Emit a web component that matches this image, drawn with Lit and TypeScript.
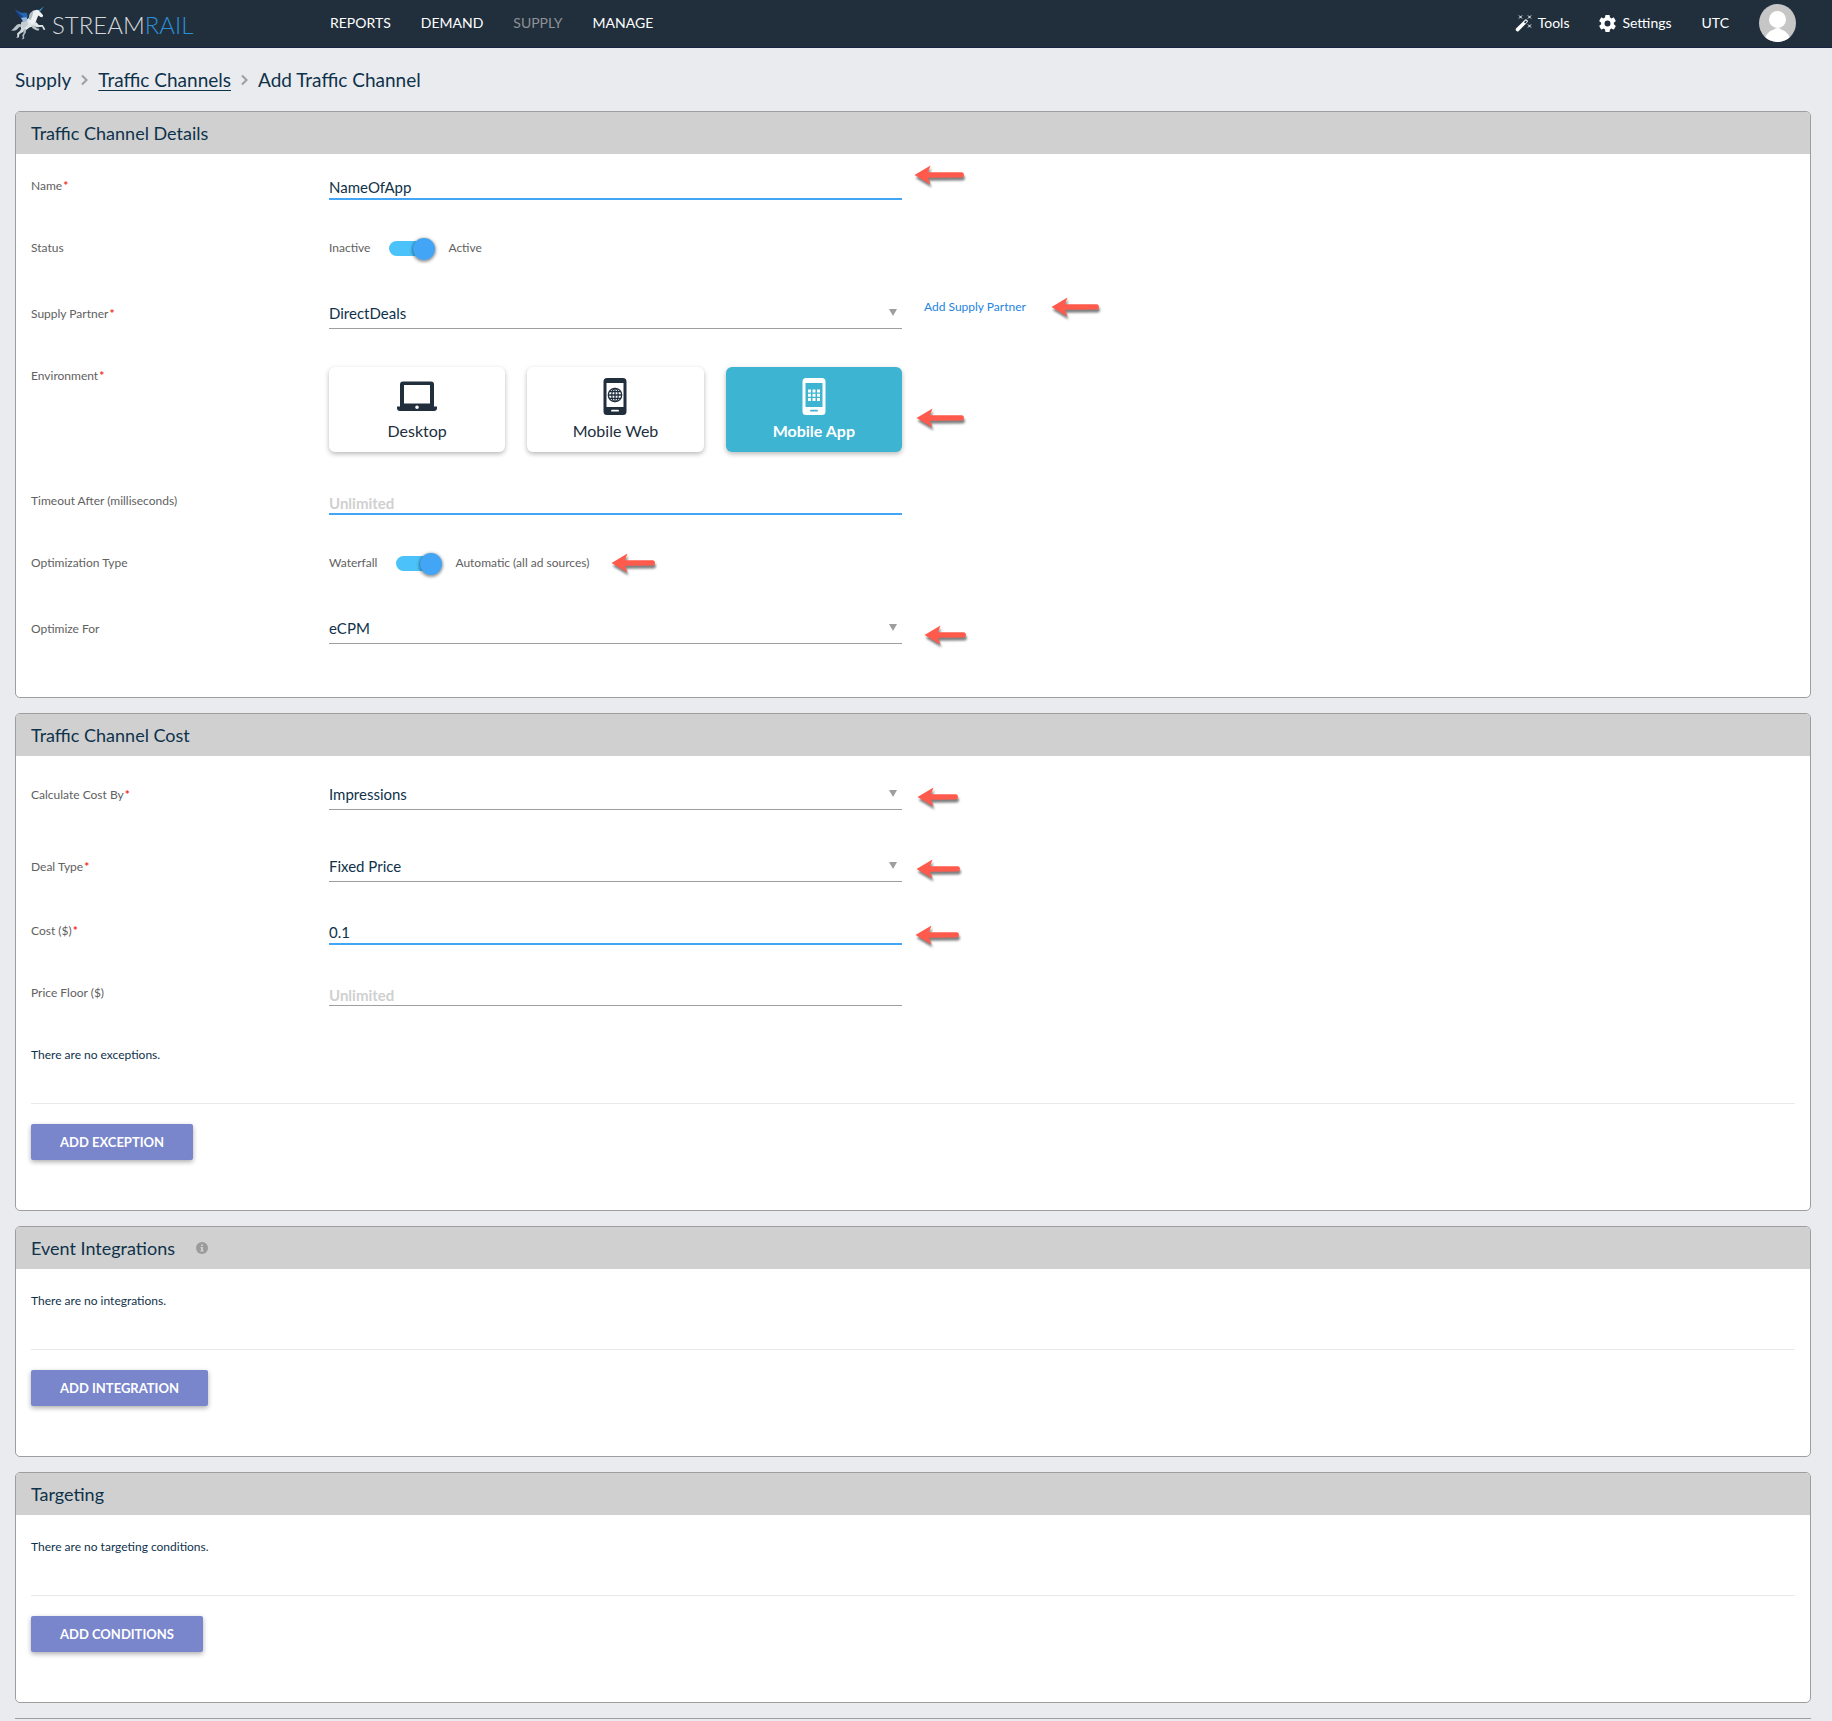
import { LitElement, html, css, svg, nothing, type TemplateResult } from "lit";
import { customElement, state } from "lit/decorators.js";
import { classMap } from "lit/directives/class-map.js";
import { styleMap } from "lit/directives/style-map.js";

type Environment = "desktop" | "web" | "app";

const unicorn = html`
  <svg class="unicorn" viewBox="28 12 112 108" aria-hidden="true">
    <path d="M60 70 C50 66 45 78 38 84 C36 87 33 88 30 88 C38 92 48 90 52 84 C56 80 58 78 62 78z" fill="#b9c3c8" />
    <path d="M64 64 L80 54 L94 48 L108 62 L104 76 L88 80 L76 90 L64 86 L60 74z" fill="#dfe6e8" />
    <path d="M64 64 L80 54 L84 72 L70 84 L60 74z" fill="#c3cdd2" />
    <path d="M86 52 L90 38 L100 28 L112 25 L118 26 L122 32 L131 42 L129 48 L123 47 L116 43 L112 52 L108 64 L98 70 L88 64z" fill="#eef2f3" />
    <path d="M86 52 L90 36 L102 26 L98 42 L92 58z" fill="#aebbc2" />
    <path d="M64 82 L58 92 L50 99 L51 108 L47 113 L56 110 L57 101 L68 94 L76 86z" fill="#d3dbde" />
    <path d="M70 86 L70 98 L66 104 L68 112 L64 117 L72 115 L72 104 L77 96 L78 84z" fill="#aebbc2" />
    <path d="M98 68 L110 64 L118 72 L130 72 L136 82 L138 87 L132 87 L128 78 L114 79 L102 76z" fill="#dfe6e8" />
    <path d="M94 74 L104 74 L112 82 L120 84 L116 90 L108 88 L98 82z" fill="#b9c3c8" />
    <path d="M44 24 L62 34 L80 34 L83 44 L80 56 L72 60 L58 46z" fill="#2468b4" />
    <path d="M44 24 L66 44 L76 58 L68 54 L52 40z" fill="#173f86" />
    <path d="M62 50 L80 48 L82 58 L70 64z" fill="#8fb7dd" />
    <path d="M117 27 L134 14 L121 31z" fill="#3b9de0" />
  </svg>
`;

const wand = html`
  <svg class="glyph" viewBox="0 0 17 17" aria-hidden="true">
    <path d="M1 13.6 L10.2 4.6 Q11 4 11.8 4.7 L12.6 5.5 Q13.3 6.3 12.6 7 L3.5 16.2 Q2.6 16.9 1.8 16.2 L1 15.4 Q0.3 14.5 1 13.6z M9 7.3 L10.2 8.5 L12 6.6 L10.9 5.5z" fill="#fff" fill-rule="evenodd" />
    <path d="M4 0.5l3 3m0-3l-3 3M13 0.5l3 3m0-3l-3 3M13 9.5l3 3m0-3l-3 3" stroke="#fff" stroke-width="1" />
  </svg>
`;

const cog = html`
  <svg class="glyph" viewBox="2 2 20 20" aria-hidden="true">
    <path fill="#fff" d="M12,15.5A3.5,3.5 0 0,1 8.5,12A3.5,3.5 0 0,1 12,8.5A3.5,3.5 0 0,1 15.5,12A3.5,3.5 0 0,1 12,15.5M19.43,12.97C19.47,12.65 19.5,12.33 19.5,12C19.5,11.67 19.47,11.34 19.43,11L21.54,9.37C21.73,9.22 21.78,8.95 21.66,8.73L19.66,5.27C19.54,5.05 19.27,4.96 19.05,5.05L16.56,6.05C16.04,5.66 15.5,5.32 14.87,5.07L14.5,2.42C14.46,2.18 14.25,2 14,2H10C9.75,2 9.54,2.18 9.5,2.42L9.13,5.07C8.5,5.32 7.96,5.66 7.44,6.05L4.95,5.05C4.73,4.96 4.46,5.05 4.34,5.27L2.34,8.73C2.21,8.95 2.27,9.22 2.46,9.37L4.57,11C4.53,11.34 4.5,11.67 4.5,12C4.5,12.33 4.53,12.65 4.57,12.97L2.46,14.63C2.27,14.78 2.21,15.05 2.34,15.27L4.34,18.73C4.46,18.95 4.73,19.03 4.95,18.95L7.44,17.94C7.96,18.34 8.5,18.68 9.13,18.93L9.5,21.58C9.54,21.82 9.75,22 10,22H14C14.25,22 14.46,21.82 14.5,21.58L14.87,18.93C15.5,18.67 16.04,18.34 16.56,17.94L19.05,18.95C19.27,19.03 19.54,18.95 19.66,18.73L21.66,15.27C21.78,15.05 21.73,14.78 21.54,14.63L19.43,12.97Z" />
  </svg>
`;

const chevron = html`
  <svg class="chevron" viewBox="0 0 7 12" aria-hidden="true">
    <path d="M1 1.5 L5.5 6 L1 10.5" fill="none" stroke="#9e9e9e" stroke-width="2" />
  </svg>
`;

const laptop = html`
  <svg class="env-icon" viewBox="0 0 40 38" aria-hidden="true">
    <path fill="currentColor" fill-rule="evenodd" d="M6 4.500h28a3 3 0 0 1 3 3V29.500h3v1.500a3 3 0 0 1-3 3H3a3 3 0 0 1-3-3v-1.500h3V7.500a3 3 0 0 1 3-3zM7 8v18.500h26V8zM20 28.400a1.800 1.800 0 1 0 .01 3.600 1.800 1.800 0 0 0 0-3.600z" />
  </svg>
`;

const phone = (screen: TemplateResult) => html`
  <svg class="env-icon" viewBox="0 0 40 38" aria-hidden="true">
    <path fill="currentColor" fill-rule="evenodd" d="M12 1h16a3.500 3.500 0 0 1 3.500 3.500v30a3.500 3.500 0 0 1-3.500 3.500H12A3.500 3.500 0 0 1 8.500 34.500V4.500A3.500 3.500 0 0 1 12 1zM11.500 6v24h17v-24zM17 32.700a.9.9 0 0 0 0 1.900h6a.9.9 0 0 0 0-1.900z" />
    ${screen}
  </svg>
`;

const globe = svg`
  <g fill="none" stroke="currentColor" stroke-width="1.3">
    <circle cx="20" cy="18" r="6.7" />
    <ellipse cx="20" cy="18" rx="3.2" ry="6.7" />
    <path d="M20 11.300v13.400M13.300 18h13.400M14.300 14.700h11.400M14.300 21.300h11.400" />
  </g>
`;

const appGrid = svg`
  <path fill="currentColor" d="M14 12.500h3v3h-3zM18.500 12.500h3v3h-3zM23 12.500h3v3h-3zM14 16.800h3v3h-3zM18.500 16.800h3v3h-3zM23 16.800h3v3h-3zM14 21.100h3v3h-3zM18.500 21.100h3v3h-3zM23 21.100h3v3h-3z" />
`;

/** Red callout arrow laid over a row: tip position relative to the row, and its length. */
const arrow = (x: number, y: number, length: number) => html`
  <svg
    class="arrow"
    viewBox="0 0 ${length + 4} 26"
    style=${styleMap({ left: `${x}px`, top: `${y - 11}px`, width: `${length + 4}px` })}
    aria-hidden="true"
  >
    <path
      d="M0.5 11 L16.5 1.5 L14 8.3 L${length - 2} 8.3 Q${length} 8.5 ${length} 11 Q${length} 13.4 ${length - 2} 13.4 L14 13.7 L16.5 20.5z"
      fill="#ff5a4b"
    />
  </svg>
`;

@customElement("app-root")
export class AppRoot extends LitElement {
  @state() private environment: Environment = "app";

  static styles = css`
    :host {
      display: block;
      min-height: 100vh;
      background: #eaebef;
      color: #0f324b;
      font: 12px/16px Lato, "Liberation Sans", sans-serif;
    }
    *, *::before { box-sizing: border-box; }
    a { color: inherit; text-decoration: none; }
    .topbar {
      display: flex;
      align-items: center;
      height: 48px;
      padding: 0 36px 1px 10px;
      background: #212f3d;
      border-bottom: 1px solid #1a2440;
      color: #fff;
      font-size: 14px;
      line-height: 20px;
    }
    .brand { display: flex; align-items: center; gap: 6px; width: 320px; }
    .unicorn { width: 36px; height: 36px; }
    .wordmark { font-size: 24px; line-height: 32px; font-weight: 300; padding-top: 4px; color: #d5d9dc; }
    .wordmark-accent { color: #2b8fd8; }
    .nav { display: flex; gap: 30px; flex: 1; }
    .current { color: #8f9296; }
    .account { display: flex; align-items: center; gap: 30px; }
    .tool { display: flex; align-items: center; gap: 6px; }
    .glyph { width: 17px; height: 17px; }
    .avatar { width: 37px; height: 38px; border-radius: 50%; display: block; }
    .page { display: flex; flex-direction: column; gap: 15px; padding: 0 21px 0 15px; }
    .crumbs {
      display: flex;
      align-items: center;
      gap: 10px;
      height: 48px;
      padding-top: 15px;
      font-size: 19px;
      line-height: 24px;
    }
    .crumb-link { text-decoration: underline; text-decoration-thickness: 1px; text-underline-offset: 3px; }
    .chevron { width: 7px; height: 12px; }
    .card { border: 1px solid #9e9e9e; border-radius: 5px; background: #fff; overflow: hidden; }
    .card-head {
      display: flex;
      align-items: center;
      gap: 21px;
      height: 42px;
      padding: 0 15px;
      background: #d0d0d0;
    }
    .card-title { margin: 0; font-size: 18px; line-height: 24px; font-weight: 400; }
    .info { width: 12px; height: 12px; }
    .card-body { padding: 15px 15px 50px; }
    .card-body.form { padding-bottom: 23px; }
    .card-body.cost { padding-top: 18px; }
    .row {
      position: relative;
      display: grid;
      grid-template-columns: 298px minmax(0, 573px) 1fr;
      min-height: 62px;
      align-items: start;
    }
    .row.pick { min-height: 66px; }
    .cost .row.pick { min-height: 72px; }
    .cost .row.pick + .row.pick { min-height: 68px; }
    .row.environment { min-height: 125px; }
    .label { color: #616161; line-height: 34px; }
    .pick .label { line-height: 42px; }
    .required { margin-left: 1px; color: #f62d20; font-weight: 700; }
    .text-input, .select {
      width: 100%;
      margin: 0;
      border: 0;
      border-bottom: 1px solid #9e9e9e;
      border-radius: 0;
      outline: none;
      background: transparent;
      color: inherit;
      font: 15px/20px Lato, "Liberation Sans", sans-serif;
    }
    .text-input { height: 30px; padding: 7px 0 0; }
    .text-input.filled { height: 31px; border-bottom: 2px solid #42a5f5; }
    .text-input:placeholder-shown { padding-top: 9px; }
    .text-input::placeholder { color: #d0d0d0; font-weight: 700; opacity: 1; }
    .select-wrap { display: grid; }
    .select { grid-area: 1 / 1; height: 36px; padding: 4px 0 0; appearance: none; }
    .caret {
      grid-area: 1 / 1;
      justify-self: end;
      width: 8px;
      height: 7px;
      margin: 16px 5px 0 0;
      pointer-events: none;
    }
    .switch { display: flex; align-items: center; gap: 19px; height: 34px; color: #616161; }
    .toggle {
      position: relative;
      appearance: none;
      width: 40px;
      height: 15px;
      margin: 0;
      border-radius: 15px;
      background: #4bc3fa;
    }
    .toggle::before {
      content: "";
      position: absolute;
      left: 0;
      top: -3px;
      width: 22px;
      height: 22px;
      border-radius: 50%;
      background: #42a5f5;
      box-shadow: 0 1px 3px 1px rgba(0, 0, 0, 0.4);
    }
    .toggle:checked::before { left: 24px; }
    .aside-link { justify-self: start; margin-left: 22px; line-height: 28px; color: #2484e0; }
    .env-list { display: grid; grid-template-columns: repeat(3, 1fr); gap: 22px; padding-top: 8px; }
    .env {
      display: flex;
      flex-direction: column;
      align-items: center;
      gap: 6px;
      height: 85px;
      padding-top: 10px;
      border-radius: 6px;
      background: #fff;
      box-shadow: 0 2px 5px rgba(0, 0, 0, 0.28);
      color: #212f3d;
      font-size: 16px;
      line-height: 20px;
      cursor: pointer;
    }
    .env.selected { background: #3cb4d2; color: #fff; font-weight: 700; }
    .env-radio { position: absolute; appearance: none; margin: 0; width: 0; height: 0; }
    .env-icon { width: 40px; height: 38px; }
    .empty { margin: 0; line-height: 34px; }
    .divider { height: 1px; margin: 31px 0 20px; border: 0; background: #e8e8e8; }
    .action {
      display: block;
      height: 36px;
      padding: 0 29px;
      border: 0;
      border-radius: 2px;
      background: #7986cb;
      box-shadow: 0 2px 5px rgba(0, 0, 0, 0.32);
      color: #fff;
      font: 700 13px/34px Lato, "Liberation Sans", sans-serif;
      text-transform: uppercase;
    }
    .arrow {
      position: absolute;
      height: 26px;
      filter: drop-shadow(1px 3px 1px rgba(0, 0, 0, 0.5));
      pointer-events: none;
    }
    .next-section { height: 3px; border-top: 1px solid #9e9e9e; }
  `;

  private label(id: string, text: string, required = false) {
    return html`<label class="label" for=${id}>${text}${required ? html`<span class="required">*</span>` : nothing}</label>`;
  }

  private textRow(id: string, text: string, value: string, options: { required?: boolean; active?: boolean } = {}, mark: unknown = nothing) {
    return html`
      <div class="row">
        ${this.label(id, text, options.required)}
        <input
          id=${id}
          class=${classMap({ "text-input": true, filled: !!options.active })}
          type="text"
          .value=${value}
          placeholder="Unlimited"
        />
        ${mark}
      </div>
    `;
  }

  private selectRow(id: string, text: string, value: string, required: boolean, extra: unknown) {
    return html`
      <div class="row pick">
        ${this.label(id, text, required)}
        <div class="select-wrap">
          <select id=${id} class="select"><option>${value}</option></select>
          <svg class="caret" viewBox="0 0 8 7" aria-hidden="true"><path d="M0 0h8L4 7z" fill="#9e9e9e" /></svg>
        </div>
        ${extra}
      </div>
    `;
  }

  private switchRow(id: string, text: string, off: string, on: string, mark: unknown = nothing) {
    return html`
      <div class="row">
        ${this.label(id, text)}
        <div class="switch">
          <span>${off}</span>
          <input id=${id} class="toggle" type="checkbox" role="switch" checked />
          <span>${on}</span>
        </div>
        ${mark}
      </div>
    `;
  }

  private environmentCard(value: Environment, text: string, icon: TemplateResult) {
    return html`
      <label class=${classMap({ env: true, selected: this.environment === value })}>
        <input
          class="env-radio"
          type="radio"
          name="environment"
          .checked=${this.environment === value}
          @change=${() => (this.environment = value)}
        />
        ${icon}
        <span>${text}</span>
      </label>
    `;
  }

  private listFooter(empty: string, action: string) {
    return html`
      <p class="empty">${empty}</p>
      <hr class="divider" />
      <button class="action" type="button">${action}</button>
    `;
  }

  private card(title: string, body: unknown, kind = "", icon: unknown = nothing) {
    return html`
      <section class="card">
        <header class="card-head"><h2 class="card-title">${title}</h2>${icon}</header>
        <div class="card-body ${kind}">${body}</div>
      </section>
    `;
  }

  render() {
    const info = html`
      <svg class="info" viewBox="0 0 12 12" role="img" aria-label="About event integrations">
        <circle cx="6" cy="6" r="6" fill="#9b9b9b" />
        <path d="M5 2.500h2v1.600H5zM4.500 5h2.500v3.500h.7v1H4.300v-1H5V6h-.5z" fill="#d0d0d0" />
      </svg>
    `;
    return html`
      <header class="topbar">
        <a class="brand" href="#home">
          ${unicorn}
          <span class="wordmark">STREAM<span class="wordmark-accent">RAIL</span></span>
        </a>
        <nav class="nav">
          <a href="#reports">REPORTS</a>
          <a href="#demand">DEMAND</a>
          <a class="current" href="#supply" aria-current="page">SUPPLY</a>
          <a href="#manage">MANAGE</a>
        </nav>
        <div class="account">
          <a class="tool" href="#tools">${wand}Tools</a>
          <a class="tool" href="#settings">${cog}Settings</a>
          <a href="#timezone">UTC</a>
          <a href="#profile" aria-label="Profile">
            <svg class="avatar" viewBox="0 0 37 38" aria-hidden="true">
              <rect width="37" height="38" fill="#c6c6c6" />
              <circle cx="18.5" cy="15.5" r="8.5" fill="#fff" />
              <path d="M5 38 C6 31 10 27 14 26 Q18.5 22 23 26 C27 27 31 31 32 38z" fill="#fff" />
            </svg>
          </a>
        </div>
      </header>

      <main class="page">
        <nav class="crumbs" aria-label="Breadcrumb">
          <span>Supply</span>${chevron}<a class="crumb-link" href="#channels">Traffic Channels</a>${chevron}<span>Add Traffic Channel</span>
        </nav>

        ${this.card(
          "Traffic Channel Details",
          html`
            ${this.textRow("name", "Name", "NameOfApp", { required: true, active: true }, arrow(883, 6, 50))}
            ${this.switchRow("status", "Status", "Inactive", "Active")}
            ${this.selectRow("partner", "Supply Partner", "DirectDeals", true, html`
              <a class="aside-link" href="#add-partner">Add Supply Partner</a>
              ${arrow(1020, 14, 48)}
            `)}
            <div class="row environment" role="radiogroup" aria-labelledby="environment-label">
              <span class="label" id="environment-label">Environment<span class="required">*</span></span>
              <div class="env-list">
                ${this.environmentCard("desktop", "Desktop", laptop)}
                ${this.environmentCard("web", "Mobile Web", phone(globe))}
                ${this.environmentCard("app", "Mobile App", phone(appGrid))}
              </div>
              ${arrow(885, 59, 48)}
            </div>
            ${this.textRow("timeout", "Timeout After (milliseconds)", "", { active: true })}
            ${this.switchRow("optimization", "Optimization Type", "Waterfall", "Automatic (all ad sources)", arrow(580, 17, 44))}
            ${this.selectRow("optimize-for", "Optimize For", "eCPM", false, arrow(893, 27, 42))}
          `,
          "form",
        )}

        ${this.card(
          "Traffic Channel Cost",
          html`
            ${this.selectRow("cost-by", "Calculate Cost By", "Impressions", true, arrow(886, 23, 41))}
            ${this.selectRow("deal", "Deal Type", "Fixed Price", true, arrow(885, 23, 44))}
            ${this.textRow("cost", "Cost ($)", "0.1", { required: true, active: true }, arrow(884, 21, 44))}
            ${this.textRow("floor", "Price Floor ($)", "")}
            ${this.listFooter("There are no exceptions.", "Add Exception")}
          `,
          "cost",
        )}

        ${this.card("Event Integrations", this.listFooter("There are no integrations.", "Add Integration"), "", info)}
        ${this.card("Targeting", this.listFooter("There are no targeting conditions.", "Add Conditions"))}
        <div class="next-section"></div>
      </main>
    `;
  }
}
